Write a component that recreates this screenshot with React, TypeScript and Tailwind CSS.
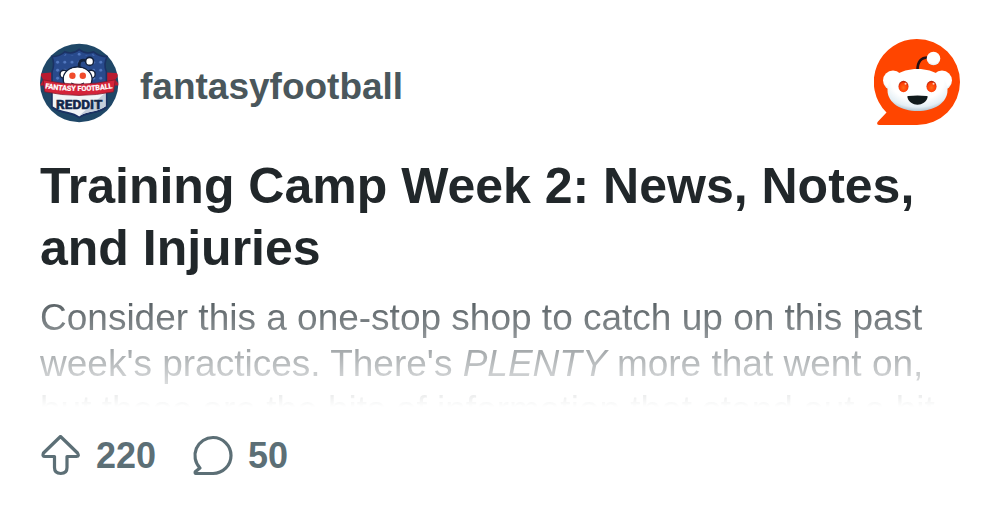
function CommunityAvatar() {
  return (
    <svg viewBox="0 0 100 100" className="size-20 shrink-0" role="img" aria-label="Fantasy Football Reddit">
      <defs>
        <clipPath id="avatar-clip">
          <circle cx="49" cy="50" r="49" />
        </clipPath>
        <pattern id="stars" width="9" height="10" patternUnits="userSpaceOnUse">
          <circle cx="4" cy="4" r="1.8" fill="#5278c0" />
        </pattern>
        <path id="ribbon-line" d="M3 56 Q48.500 64 94 56" />
      </defs>
      <g clipPath="url(#avatar-clip)">
        <rect width="100" height="100" fill="#1f4767" />
        <path d="M15 17 Q25 17 31 11 Q41 15 49 8 Q57 15 67 11 Q74 17 84 17 Q79 26 83 36 V80 Q76 85 64 87 Q54 89 49 93 Q44 89 34 87 Q22 85 15 80 V36 Q19 26 15 17Z" fill="#284a8c" stroke="#1b3263" strokeWidth="2" />
        <path d="M19 19 Q28 18 32 14 Q41 18 49 12 Q57 18 66 14 Q72 18 80 19 V50 H19Z" fill="url(#stars)" />
        <path d="M15 60 H83 V80 Q76 85 64 87 Q54 89 49 93 Q44 89 34 87 Q22 85 15 80Z" fill="#f1f3f6" stroke="#1b3263" strokeWidth="2" />
        <path d="M82 62 V79 Q75 84 64 86 Q54 88 49 91Z" fill="#c4cedb" />
        <path d="M49 31 Q48 18 59 22.500" fill="none" stroke="#12213d" strokeWidth="3.500" />
        <circle cx="62" cy="23" r="5" fill="#fff" stroke="#12213d" strokeWidth="2" />
        <g fill="#fff" stroke="#12213d" strokeWidth="1.8">
          <circle cx="30" cy="39" r="5" />
          <circle cx="64" cy="39" r="5" />
          <ellipse cx="47" cy="45" rx="18" ry="15" />
        </g>
        <ellipse cx="47" cy="45" rx="17" ry="14" fill="#fff" />
        <circle cx="40.500" cy="41" r="4" fill="#f04b2b" />
        <circle cx="53.500" cy="41" r="4" fill="#f04b2b" />
        <path d="M39 50 Q47 55 55 50" fill="none" stroke="#12213d" strokeWidth="1.500" />
        <path d="M0 38 L14 37 V53 L0 53 L4 46Z M100 38 L84 37 V53 L100 53 L94 46Z" fill="#b81b30" />
        <path d="M4 46 Q48.500 57 94 46 L92 61 Q48.500 70 6 61Z" fill="#d42339" stroke="#84192c" strokeWidth="1" />
        <text fill="#fff" stroke="#fff" strokeWidth="0.300" fontSize="9" fontWeight="700" fontFamily="Roboto, Liberation Sans, sans-serif" textAnchor="middle">
          <textPath href="#ribbon-line" startOffset="50%">FANTASY FOOTBALL</textPath>
        </text>
        <text x="49" y="83" fill="#14284b" stroke="#14284b" strokeWidth="0.800" fontSize="17" fontWeight="700" fontFamily="Roboto, Liberation Sans, sans-serif" textAnchor="middle">REDDIT</text>
      </g>
    </svg>
  );
}

function RedditLogo() {
  return (
    <svg viewBox="0 0 86 86" className="size-[86px] shrink-0" role="img" aria-label="Reddit">
      <defs>
        <radialGradient id="face" cx="50%" cy="30%" r="72%">
          <stop offset="0.6" stopColor="#fff" />
          <stop offset="0.84" stopColor="#e4eff5" />
          <stop offset="1" stopColor="#a9bdca" />
        </radialGradient>
        <radialGradient id="ear" cx="50%" cy="35%" r="70%">
          <stop offset="0.7" stopColor="#fff" />
          <stop offset="1" stopColor="#d3e0e8" />
        </radialGradient>
        <radialGradient id="eye" cx="50%" cy="60%" r="55%">
          <stop offset="0" stopColor="#ff6a18" />
          <stop offset="0.75" stopColor="#ff3c05" />
          <stop offset="1" stopColor="#b52206" />
        </radialGradient>
      </defs>
      <path d="M43 0 A43 43 0 0 1 43 86 H5 C3 86 2.500 84 4 82.500 L12.500 73.500 A43 43 0 0 1 43 0Z" fill="#ff4500" />
      <path d="M43.500 31 C43.500 23 47 18.500 54 18.500" fill="none" stroke="#241015" strokeWidth="2.600" strokeLinecap="round" />
      <circle cx="59.500" cy="19.500" r="6.800" fill="url(#ear)" />
      <circle cx="19" cy="41.500" r="10" fill="url(#ear)" />
      <circle cx="68" cy="41.500" r="10" fill="url(#ear)" />
      <path d="M43.500 30 C61 30 73.500 39 73.500 51 C73.500 64 60 72 43.500 72 C27 72 13.500 64 13.500 51 C13.500 39 26 30 43.500 30Z" fill="url(#face)" />
      <ellipse cx="29.500" cy="47.500" rx="5" ry="5.800" fill="url(#eye)" />
      <ellipse cx="57.500" cy="47.500" rx="5" ry="5.800" fill="url(#eye)" />
      <circle cx="31.500" cy="44.800" r="1" fill="#ffd2bd" />
      <circle cx="59.500" cy="44.800" r="1" fill="#ffd2bd" />
      <path d="M34.500 57 Q43.500 56 52.500 57 C53.500 57 54 57.500 53.500 58.500 C51.500 68 35.500 68 33.500 58.500 C33 57.500 33.500 57 34.500 57Z" fill="#111a1c" />
    </svg>
  );
}

function UpvoteIcon() {
  return (
    <svg viewBox="0 0 42 42" className="size-[42px] shrink-0" fill="none" stroke="#5c6f76" strokeWidth="3.2" strokeLinejoin="round" aria-hidden="true">
      <path d="M20.500 1.500 L37.500 18 Q39.500 21.500 36.500 21.500 H27 V32.500 Q27 38.500 20.800 38.500 Q14.500 38.500 14.500 32.500 V21.500 H5 Q2 21.500 3.500 18Z" />
    </svg>
  );
}

function CommentIcon() {
  return (
    <svg viewBox="0 0 42 42" className="size-[42px] shrink-0" fill="none" stroke="#5c6f76" strokeWidth="3.2" strokeLinejoin="round" aria-hidden="true">
      <path d="M21 2.500 A18 18 0 0 1 21 38.500 H4 Q2.500 38 3.500 36.500 L8 33 A18 18 0 0 1 21 2.500Z" />
    </svg>
  );
}

export default function App() {
  return (
    <article className="min-h-screen bg-white px-10 pt-[39px] pb-11 font-['Liberation_Sans',Arial,sans-serif]">
      <header className="flex items-center justify-between">
        <a href="#community" className="flex items-center gap-5 pt-[2px] text-[37px] leading-10 font-bold text-[#4a575c]">
          <CommunityAvatar />
          <span className="pt-2">fantasyfootball</span>
        </a>
        <RedditLogo />
      </header>
      <h1 className="mt-[30px] text-[50px] leading-[62px] font-bold text-[#21272a]">
        Training Camp Week 2: News, Notes, and Injuries
      </h1>
      <p className="mt-4 h-28 overflow-hidden text-[37px] leading-[46px] text-[#333d42] mask-[linear-gradient(to_bottom,rgba(0,0,0,0.87),transparent)]">
        Consider this a one-stop shop to catch up on this past week's practices. There's <em>PLENTY</em> more that went on, but these are the bits of information that stand out a bit
      </p>
      <footer className="mt-7 flex items-center gap-9 text-4xl font-bold text-[#5c6f76]">
        <button type="button" aria-label="Upvote, 220" className="flex items-center gap-[14px]">
          <UpvoteIcon />
          <span>220</span>
        </button>
        <button type="button" aria-label="Comments, 50" className="flex items-center gap-[14px]">
          <CommentIcon />
          <span>50</span>
        </button>
      </footer>
    </article>
  );
}
